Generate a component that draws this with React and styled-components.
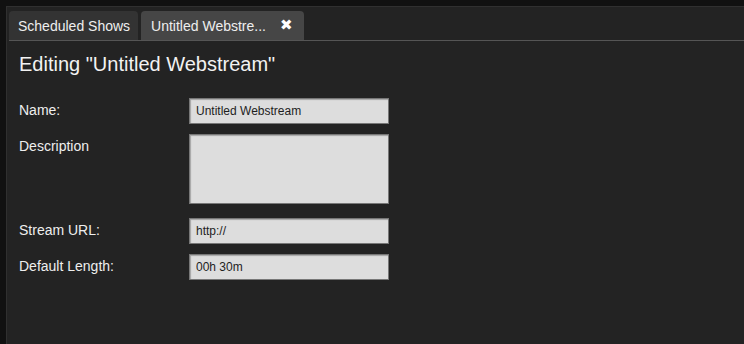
import styled, { createGlobalStyle } from "styled-components";

const GlobalStyle = createGlobalStyle`
  html, body {
    margin: 0;
    padding: 0;
    background: #111111;
  }
  body {
    font-family: "Liberation Sans", Arial, sans-serif;
  }
`;

const App = () => {
  return (
    <Page>
      <GlobalStyle />
      <Panel>
        <TabBar>
          <Tab>Scheduled Shows</Tab>
          <Tab active>
            Untitled Webstre...
            <Close>✖</Close>
          </Tab>
        </TabBar>
        <Content>
          <Heading>Editing "Untitled Webstream"</Heading>
          <Form>
            <Label>Name:</Label>
            <Field>
              <Input type="text" defaultValue="Untitled Webstream" />
            </Field>
            <Label>Description</Label>
            <Field gap="14px">
              <TextArea defaultValue="" />
            </Field>
            <Label>Stream URL:</Label>
            <Field>
              <Input type="text" defaultValue="http://" />
            </Field>
            <Label>Default Length:</Label>
            <Field>
              <Input type="text" defaultValue="00h 30m" />
            </Field>
          </Form>
        </Content>
      </Panel>
    </Page>
  );
};

export default App;

const Page = styled.div`
  box-sizing: border-box;
  width: 744px;
  height: 344px;
  padding: 6px 0 0 6px;
  display: flex;
  overflow: hidden;
`;

const Panel = styled.div`
  flex: 1;
  background: #232323;
  border-top: 1px solid #303030;
  border-left: 1px solid #303030;
  padding: 4px 0 0 2px;
  display: flex;
  flex-direction: column;
`;

const TabBar = styled.div`
  display: flex;
  gap: 3px;
  border-bottom: 1px solid #555555;
`;

const Tab = styled.div`
  display: flex;
  align-items: center;
  gap: 14px;
  height: 29px;
  padding: ${({ active }) => (active ? "0 11px 0 10px" : "0 8px 0 9px")};
  background: ${({ active }) => (active ? "#464646" : "#333333")};
  border-radius: 4px 4px 0 0;
  color: #eeeeee;
  font-size: 14px;
  white-space: nowrap;
`;

const Close = styled.span`
  font-size: 15px;
  line-height: 1;
  color: #ffffff;
  font-family: "DejaVu Sans", sans-serif;
`;

const Content = styled.div`
  padding: 12px 0 0 10px;
`;

const Heading = styled.h1`
  margin: 0 0 22px;
  font-size: 20px;
  font-weight: normal;
  color: #f2f2f2;
`;

const Form = styled.div`
  display: grid;
  grid-template-columns: 170px 200px;
`;

const Label = styled.div`
  padding-top: 4px;
  font-size: 14px;
  color: #eeeeee;
`;

const Field = styled.div`
  display: flex;
  margin-bottom: ${({ gap }) => gap || "10px"};
`;

const Input = styled.input`
  box-sizing: border-box;
  width: 200px;
  height: 26px;
  margin: 0;
  padding: 0 6px;
  background: #dddddd;
  border: 1px solid #777777;
  box-shadow: inset 1px 1px 1px rgba(0, 0, 0, 0.25);
  font-family: "Liberation Sans", Arial, sans-serif;
  font-size: 12px;
  color: #1e1e1e;
  outline: none;
`;

const TextArea = styled.textarea`
  box-sizing: border-box;
  width: 200px;
  height: 70px;
  margin: 0;
  padding: 4px 6px;
  background: #dddddd;
  border: 1px solid #777777;
  box-shadow: inset 1px 1px 1px rgba(0, 0, 0, 0.25);
  font-family: "Liberation Sans", Arial, sans-serif;
  font-size: 12px;
  color: #1e1e1e;
  resize: none;
  outline: none;
`;
